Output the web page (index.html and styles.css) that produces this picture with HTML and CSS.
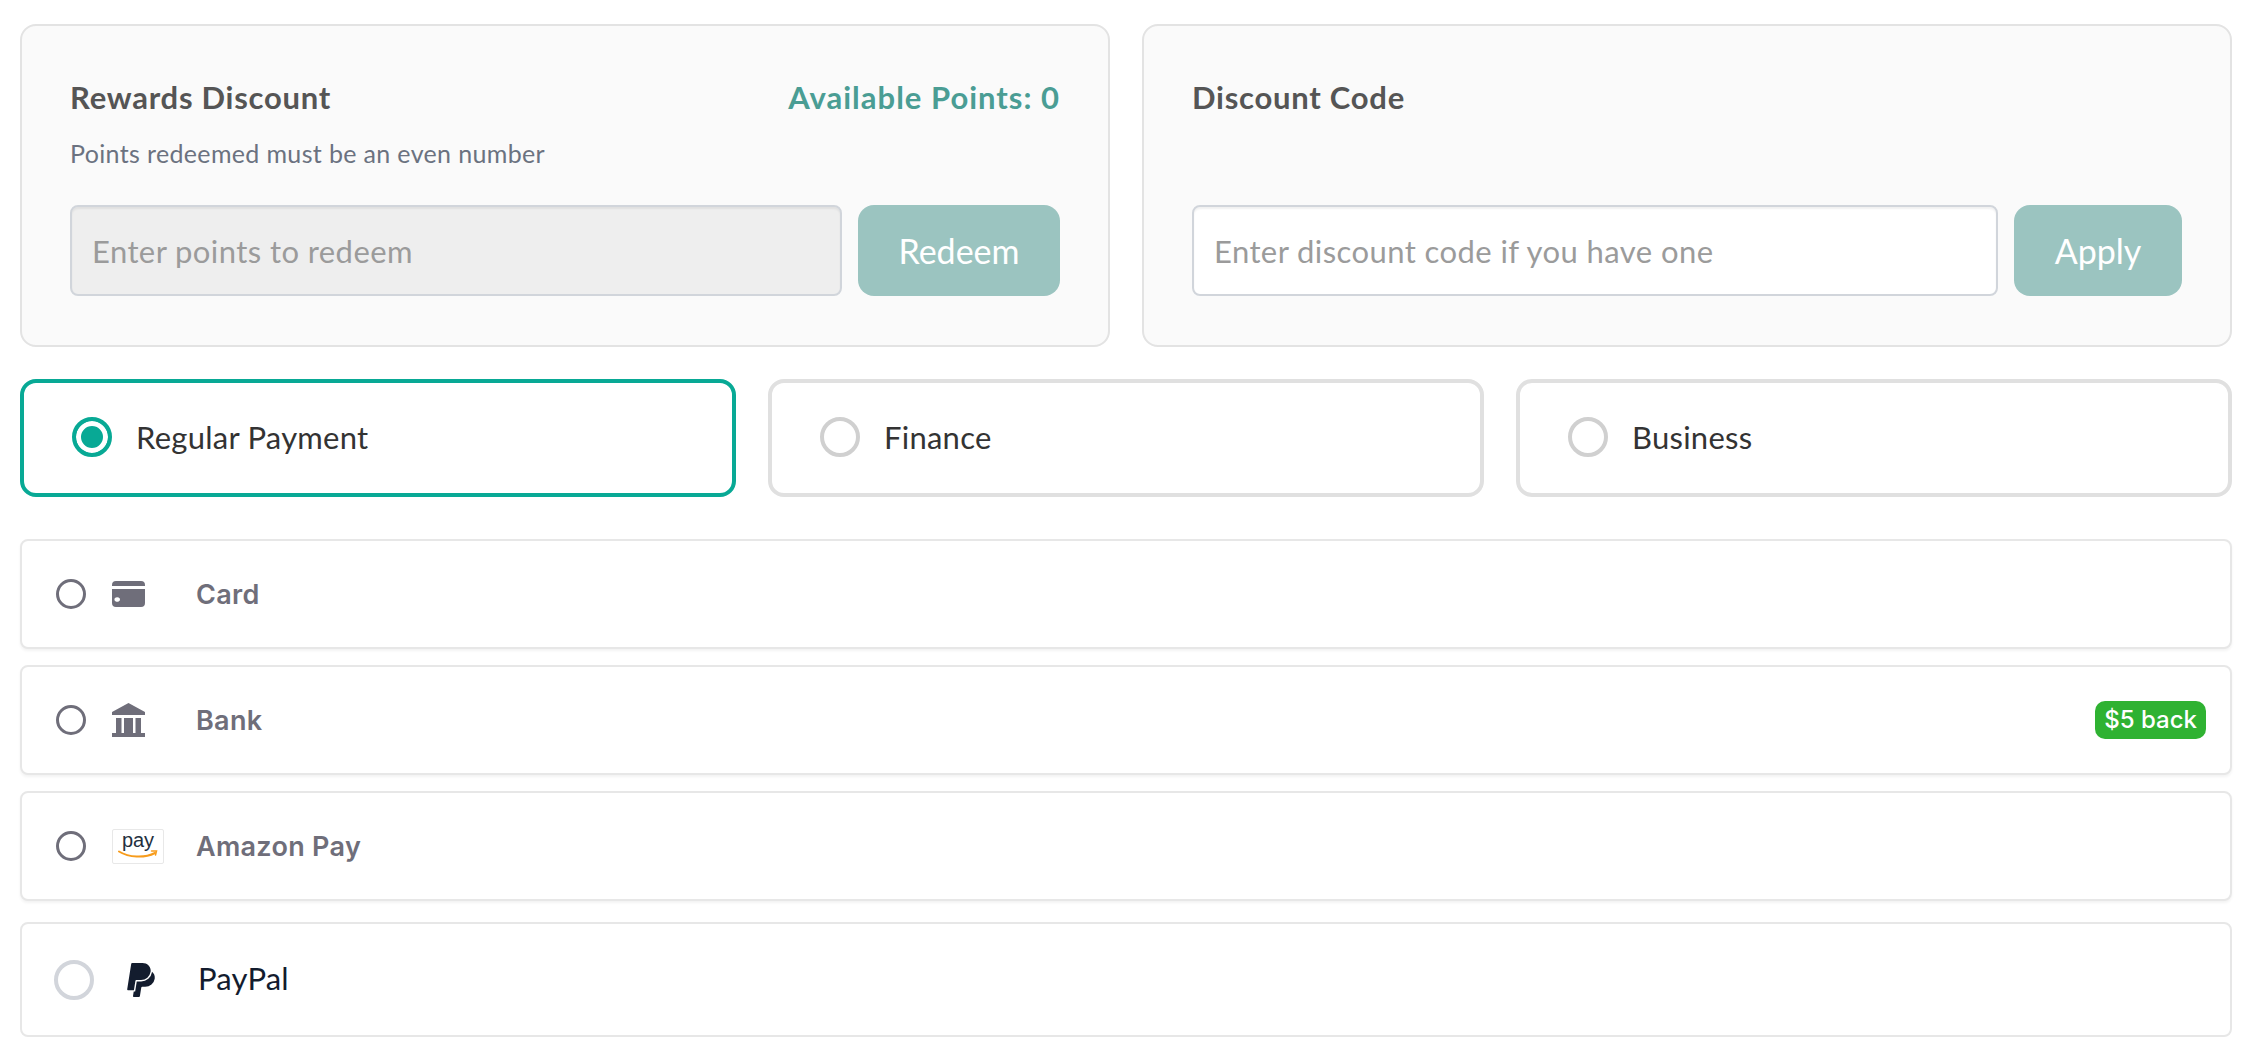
FILE: index.html
```html
<!DOCTYPE html>
<html lang="en">
<head>
  <meta charset="UTF-8">
  <title>Checkout payment</title>
  <link rel="stylesheet" href="styles.css">
</head>
<body>

<section class="discounts">
  <div class="discount-card">
    <div class="discount-head">
      <h3>Rewards Discount</h3>
      <span class="points">Available Points: 0</span>
    </div>
    <p class="note">Points redeemed must be an even number</p>
    <div class="discount-form">
      <input class="discount-input" type="text" placeholder="Enter points to redeem" disabled>
      <button class="discount-btn redeem">Redeem</button>
    </div>
  </div>
  <div class="discount-card">
    <div class="discount-head">
      <h3>Discount Code</h3>
    </div>
    <p class="note"></p>
    <div class="discount-form">
      <input class="discount-input" type="text" placeholder="Enter discount code if you have one">
      <button class="discount-btn apply">Apply</button>
    </div>
  </div>
</section>

<section class="plans">
  <div class="plan active"><span class="plan-radio"></span>Regular Payment</div>
  <div class="plan"><span class="plan-radio"></span>Finance</div>
  <div class="plan"><span class="plan-radio"></span>Business</div>
</section>

<section class="methods">
  <div class="method">
    <span class="method-radio"></span>
    <span class="method-icon">
      <svg width="33" height="26" viewBox="0 0 33 26"><path fill="#6f6e7a" d="M0 4a4 4 0 0 1 4-4h25a4 4 0 0 1 4 4v1H0zM0 8h33v14a4 4 0 0 1-4 4H4a4 4 0 0 1-4-4zm8 10.500a2.800 2.300 0 1 0 0 .01z"/></svg>
    </span>
    <span class="method-name">Card</span>
  </div>
  <div class="method">
    <span class="method-radio"></span>
    <span class="method-icon">
      <svg width="33" height="34" viewBox="0 0 33 34"><path fill="#6f6e7a" d="M16.500 0L0 9v3h33V9zM4 15h5.500v15H4zM12 15h9v15h-9zM23.500 15H29v15h-5.500zM0 30h33v4H0z"/></svg>
    </span>
    <span class="method-name">Bank</span>
    <span class="badge">$5 back</span>
  </div>
  <div class="method">
    <span class="method-radio"></span>
    <span class="method-icon">
      <span class="amazon">
        <span class="amazon-text">pay</span>
        <svg width="40" height="9" viewBox="0 0 40 9"><path fill="none" stroke="#f79c1c" stroke-width="2" stroke-linecap="round" d="M1 1.500c10 6 25 7 36 1.500"/><path fill="none" stroke="#f79c1c" stroke-width="1.500" stroke-linecap="round" d="M33.500 1h5l-1 4"/></svg>
      </span>
    </span>
    <span class="method-name">Amazon Pay</span>
  </div>
  <div class="method paypal">
    <span class="plan-radio"></span>
    <span class="paypal-icon">
      <svg width="34" height="34" viewBox="0 0 24 24"><path fill="#131c2e" d="M7.016 19.198h-4.200a.562.562 0 0 1-.555-.650L5.093.584A.692.692 0 0 1 5.776 0h7.222c3.417 0 5.904 2.488 5.846 5.500-.006.250-.027.500-.066.747A6.794 6.794 0 0 1 12.071 12H8.743a.690.690 0 0 0-.682.583l-.325 2.056-.013.083-.692 4.390-.015.087zM19.790 6.142c-.010.087-.010.175-.023.261a7.760 7.760 0 0 1-7.695 6.598H9.007l-.283 1.795-.013.083-.692 4.390-.134.843-.014.088H6.860l-.497 3.150a.562.562 0 0 0 .555.650h3.612c.340 0 .630-.249.683-.585l.952-6.031a.692.692 0 0 1 .683-.584h2.126a6.793 6.793 0 0 0 6.707-5.752c.306-1.950-.466-3.744-1.890-4.906z"/></svg>
    </span>
    <span class="paypal-name">PayPal</span>
  </div>
</section>

</body>
</html>
```

FILE: styles.css
```css
* { box-sizing: border-box; }
body { margin: 0; padding: 24px 20px 0; background: #fff; font-family: "Lato", sans-serif; }

.discounts { display: grid; grid-template-columns: 1fr 1fr; gap: 32px; }
.discount-card { height: 323px; padding: 49px 48px 50px; background: #fafafa; border: 2px solid #e3e3e3; border-radius: 16px; }
.discount-head { display: flex; justify-content: space-between; align-items: center; height: 44px; }
.discount-head h3 { margin: 0; font-size: 31px; font-weight: 700; letter-spacing: 0.75px; color: #555; }
.points { font-size: 31px; font-weight: 700; color: #4a9d94; letter-spacing: 1px; }
.note { margin: 0; height: 86px; padding-top: 19px; font-size: 25px; letter-spacing: 0.35px; color: #6b7280; }
.discount-form { display: flex; gap: 16px; height: 91px; }
.discount-input { flex: 1; min-width: 0; padding: 0 20px; font-family: inherit; font-size: 31px; letter-spacing: 0.42px; background: #fff; border: 2px solid #d1d5db; border-radius: 8px; box-shadow: inset 0 2px 2px rgba(0, 0, 0, 0.06); }
.discount-input:disabled { background: #eee; }
.discount-input::placeholder { color: #9b9b9b; opacity: 1; }
.discount-btn { border: none; border-radius: 16px; background: #9bc4c0; color: #fff; font-family: inherit; font-size: 34px; }
.redeem { width: 202px; }
.apply { width: 168px; }

.plans { display: grid; grid-template-columns: repeat(3, 1fr); gap: 32px; margin-top: 32px; }
.plan { display: flex; align-items: center; gap: 24px; height: 118px; padding: 0 0 2px 48px; border: 4px solid #e0e0e0; border-radius: 16px; font-size: 31px; letter-spacing: 0.25px; color: #333; }
.plan.active { border-color: #08a995; }
.plan-radio { flex: none; width: 40px; height: 40px; border: 4px solid #d0d0d0; border-radius: 50%; }
.active .plan-radio { border-color: #08a995; background: #08a995; box-shadow: inset 0 0 0 5px #fff; }

.methods { display: flex; flex-direction: column; gap: 16px; margin-top: 42px; }
.method { display: flex; align-items: center; height: 110px; padding-left: 34px; padding-right: 24px; background: #fff; border: 2px solid #e7e7e7; border-radius: 8px; box-shadow: 0 2px 3px rgba(0, 0, 0, 0.05); font-family: "Inter", sans-serif; }
.method-radio { flex: none; width: 30px; height: 30px; border: 3px solid #6f6e7a; border-radius: 50%; }
.method-icon { flex: none; display: flex; align-items: center; width: 84px; margin-left: 26px; }
.method-name { font-size: 27px; font-weight: 600; letter-spacing: 0.3px; color: #6f6e7a; }
.badge { margin-left: auto; padding: 0 9px; height: 38px; line-height: 38px; background: #2fb232; border-radius: 10px; color: #fff; font-size: 24px; font-weight: 500; }

.amazon { display: flex; flex-direction: column; align-items: center; width: 52px; height: 35px; background: #fff; border: 1px solid #e8e8e8; border-radius: 2px; }
.amazon-text { height: 20px; font-family: "Liberation Sans", sans-serif; font-size: 20px; line-height: 20px; color: #232f3e; }

.method.paypal { height: 115px; margin-top: 5px; padding-left: 32px; box-shadow: none; }
.method.paypal .plan-radio { border-color: #d2d5db; }
.paypal-icon { flex: none; display: flex; width: 34px; margin-left: 30px; }
.paypal-name { margin-left: 40px; padding-bottom: 3px; font-family: "Lato", sans-serif; font-size: 31px; letter-spacing: 0.2px; color: #131c2e; }
```
